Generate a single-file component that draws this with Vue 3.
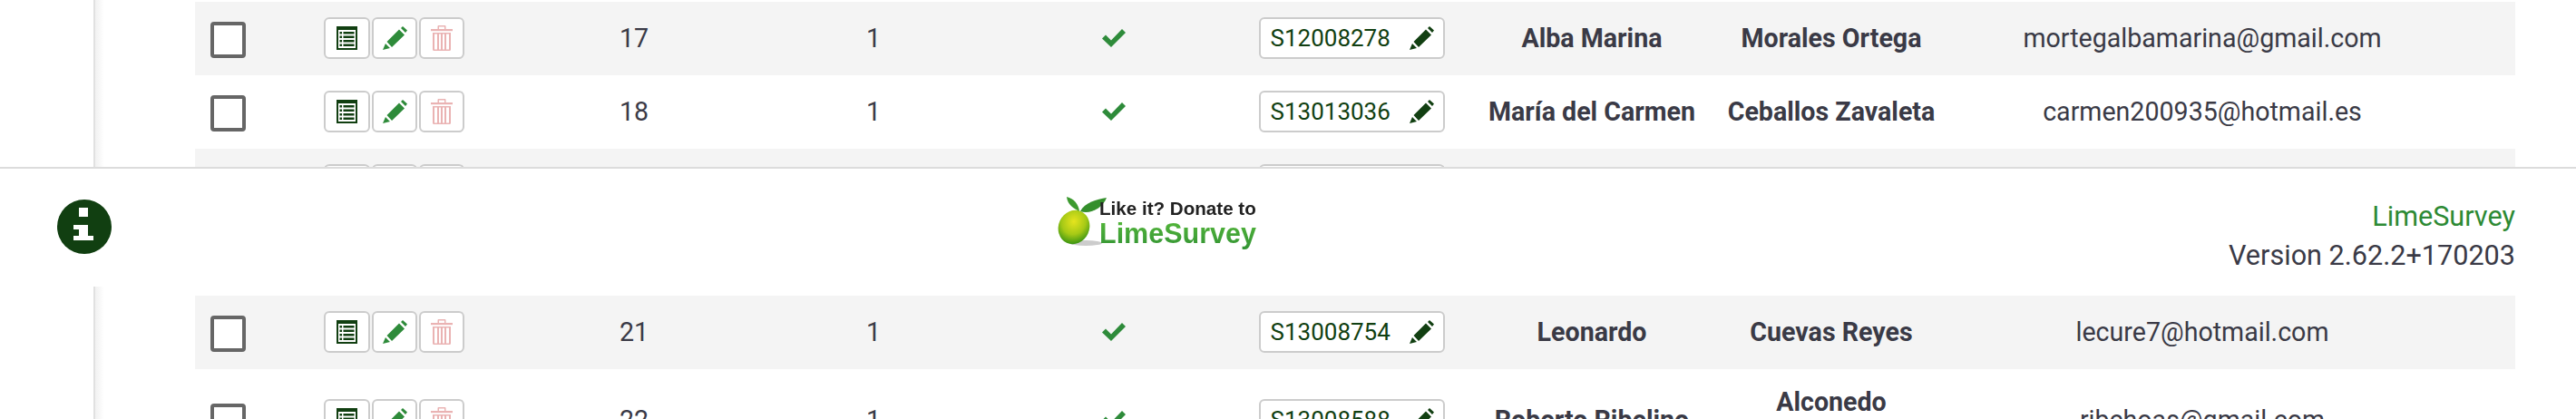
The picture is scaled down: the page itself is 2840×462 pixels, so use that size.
<script setup>
const topRows = [
  { id: '17', uid: '1', token: 'S12008278', first: 'Alba Marina', last: 'Morales Ortega', email: 'mortegalbamarina@gmail.com', odd: true },
  { id: '18', uid: '1', token: 'S13013036', first: 'María del Carmen', last: 'Ceballos Zavaleta', email: 'carmen200935@hotmail.es', odd: false },
  { id: 'r19', uid: '', token: '', first: '', last: '', email: '', odd: true, blank: true }
]
const bottomRows = [
  { id: '21', uid: '1', token: 'S13008754', first: 'Leonardo', last: 'Cuevas Reyes', email: 'lecure7@hotmail.com', odd: true },
  { id: '22', uid: '1', token: 'S13008588', first: 'Roberto Ribelino', last: 'Alconedo\nRibera', email: 'ribchoas@gmail.com', odd: false, tall: true }
]
const sections = [
  { key: 'top', rows: topRows },
  { key: 'bottom', rows: bottomRows }
]
const pencil = 'M0 26 L3 19 L8 24 Z M4.5 17 L18 3.5 L24 9.5 L10 23 Z M20 2 L22 0 L27 4.5 L25 7 Z'
</script>

<template>
  <div class="page">
    <template v-for="(section, idx) in sections" :key="section.key">
      <section class="content" :class="section.key">
        <div class="table">
          <div v-for="r in section.rows" :key="r.id" class="row" :class="{ odd: r.odd, tall: r.tall }">
            <div class="cell"><span class="check"></span></div>
            <div class="cell actions">
              <span class="btn b1">
                <svg width="23" height="26" viewBox="0 0 23 26">
                  <rect width="23" height="26" fill="#113f11" />
                  <rect x="2" y="4" width="19" height="20" fill="#fff" />
                  <g fill="#113f11">
                    <rect x="3.5" y="6" width="2.5" height="2.5" /><rect x="7.5" y="6" width="12" height="2.5" />
                    <rect x="3.5" y="10.5" width="2.5" height="2.5" /><rect x="7.5" y="10.5" width="12" height="2.5" />
                    <rect x="3.5" y="15" width="2.5" height="2.5" /><rect x="7.5" y="15" width="12" height="2.5" />
                    <rect x="3.5" y="19.5" width="2.5" height="2.5" /><rect x="7.5" y="19.5" width="12" height="2.5" />
                  </g>
                </svg>
              </span>
              <span class="btn b2">
                <svg width="27" height="26" viewBox="0 0 27 26"><path :d="pencil" fill="#2e8b3a" /></svg>
              </span>
              <span class="btn b3">
                <svg width="24" height="28" viewBox="0 0 24 28">
                  <g fill="#eab3b3">
                    <rect x="0" y="4" width="24" height="2.2" />
                    <path d="M7.5 4.5 V1 Q7.5 0 8.5 0 H15.5 Q16.5 0 16.5 1 V4.5 H15 V1.5 H9 V4.5 Z" />
                    <path d="M2 8 H22 V26.5 Q22 28 20.5 28 H3.5 Q2 28 2 26.5 Z M4 9.5 V26.5 H7 V9.5 Z M9 9.5 V26.5 H11 V9.5 Z M13 9.5 V26.5 H15 V9.5 Z M17 9.5 V26.5 H20 V9.5 Z" fill-rule="evenodd" />
                  </g>
                </svg>
              </span>
            </div>
            <div class="cell num">{{ r.blank ? '' : r.id }}</div>
            <div class="cell num">{{ r.uid }}</div>
            <div class="cell">
              <svg v-if="!r.blank" width="26" height="20" viewBox="0 0 26 20"><path d="M0 10.5 L4 6.5 L10 12.5 L22 0 L26 4 L10 20 Z" fill="#2e8b3a" /></svg>
            </div>
            <div class="cell">
              <span class="token">
                <span>{{ r.token }}</span>
                <svg width="27" height="26" viewBox="0 0 27 26"><path :d="pencil" fill="#113f11" /></svg>
              </span>
            </div>
            <div class="cell name">{{ r.first }}</div>
            <div class="cell name">{{ r.last }}</div>
            <div class="cell mail">{{ r.email }}</div>
            <div></div>
          </div>
        </div>
      </section>
      <footer v-if="idx === 0" class="footer">
        <svg class="info" width="60" height="60" viewBox="0 0 60 60">
          <circle cx="30" cy="30" r="30" fill="#113f11" />
          <path d="M24 9 H34 V19 H24 Z M18 28 H34 V40 H40 V45 H18 V40 H24 V33 H18 Z" fill="#fff" />
        </svg>
        <div class="donate">
          <svg width="62" height="55" viewBox="0 0 62 55">
            <defs>
              <radialGradient id="lime" cx="0.42" cy="0.35" r="0.7">
                <stop offset="0" stop-color="#e6e41e" />
                <stop offset="0.55" stop-color="#a5c916" />
                <stop offset="1" stop-color="#2f8f12" />
              </radialGradient>
            </defs>
            <ellipse cx="32" cy="51" rx="18" ry="3" fill="#ccc" />
            <ellipse cx="19" cy="33.5" rx="17" ry="19" transform="rotate(25 19 33.5)" fill="url(#lime)" />
            <path d="M25 16 C19 13 12 9 11 0 C19 2 24 8 25 16 Z" fill="#3c9a2f" />
            <path d="M26 16 C31 6 44 3 55 1 C51 12 37 20 26 16 Z" fill="#348f2c" />
          </svg>
          <div class="donate-text">
            <span class="like">Like it? Donate to</span>
            <span class="lime">LimeSurvey</span>
          </div>
        </div>
        <div class="version">
          <span class="brand">LimeSurvey</span>
          <span>Version 2.62.2+170203</span>
        </div>
      </footer>
    </template>
  </div>
</template>

<style>
html, body { margin: 0; background: #fff; overflow: hidden; }
</style>

<style scoped>
.page {
  width: 2840px;
  height: 462px;
  overflow: hidden;
  font-family: Roboto, sans-serif;
  font-size: 28.6px;
  color: #3a3a46;
}
.content {
  box-sizing: border-box;
  margin-left: 103px;
  padding: 2px 0 0 110px;
  border-left: 2px solid #e1e1e1;
  overflow: hidden;
  position: relative;
}
.content::before {
  content: "";
  position: absolute;
  left: 0;
  top: 0;
  bottom: 0;
  width: 10px;
  background: linear-gradient(to right, #f1f1f1, #fff);
}
.content.top { height: 184px; }
.content.bottom { height: 146px; padding-top: 10px; }
.table { position: relative; }
.row {
  display: grid;
  grid-template-columns: 142px 241px 202px 326px 203px 322px 208px 320px 498px 96px;
  height: 81px;
  align-items: center;
  padding-bottom: 1px;
  width: 2558px;
  box-sizing: border-box;
}
.row.odd { background: #f4f4f4; }
.row.tall { height: 113px; }
.cell {
  display: flex;
  justify-content: center;
  align-items: center;
  text-align: center;
  white-space: pre-line;
}
.name, .mail, .num { white-space: pre; }
.cell:first-child { justify-content: flex-start; padding-left: 17px; }
.check {
  box-sizing: border-box;
  width: 39px;
  height: 40px;
  background: #fff;
  border: 4px solid #666;
  border-radius: 4px;
  margin-top: 4px;
}
.actions { justify-content: flex-start; gap: 2px; }
.btn, .token {
  box-sizing: border-box;
  height: 46px;
  background: #fff;
  border: 2px solid #ccc;
  border-radius: 6px;
  display: inline-flex;
  align-items: center;
  justify-content: center;
}
.btn { width: 50px; }
.b1 { width: 51px; }
.token {
  width: 205px;
  padding: 0 10px 0 11px;
  justify-content: space-between;
  color: #113f11;
  font-size: 26px;
}
.name { font-weight: 700; line-height: 40px; }
.footer {
  box-sizing: border-box;
  height: 132px;
  border-top: 2px solid #dcdcdc;
  background: #fff;
  display: grid;
  grid-template-columns: 1102px auto 1fr;
  align-items: center;
  padding: 0 67px 0 63px;
}
.info { margin-top: -2px; }
.donate {
  display: flex;
  align-items: center;
  margin-top: -13px;
  filter: blur(0.7px);
}
.donate svg { flex: none; margin-right: -15px; }
.donate-text {
  display: flex;
  flex-direction: column;
  font-family: "Liberation Sans", sans-serif;
  font-weight: 700;
  white-space: nowrap;
}
.like { font-size: 20.6px; line-height: 24px; color: #222; }
.lime {
  font-size: 30.5px;
  line-height: 30px;
  padding-bottom: 6px;
  margin-bottom: -6px;
  background: linear-gradient(#55b83a, #2f8f34);
  -webkit-background-clip: text;
  background-clip: text;
  color: transparent;
}
.version {
  display: flex;
  flex-direction: column;
  align-items: flex-end;
  font-size: 30.6px;
  line-height: 43px;
  margin-top: 17px;
}
.brand { color: #2d8a34; }
</style>
